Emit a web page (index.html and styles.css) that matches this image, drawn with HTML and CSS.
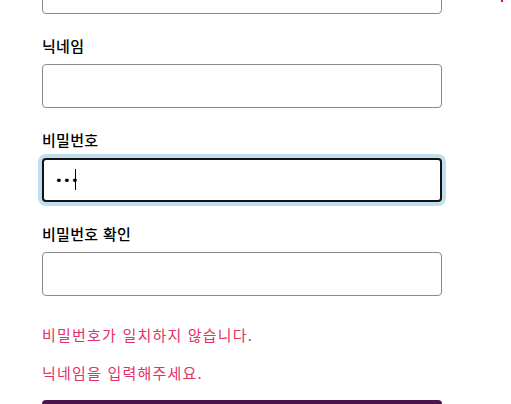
FILE: index.html
```html
<!DOCTYPE html>
<html lang="ko">
<head>
<meta charset="utf-8">
<link rel="stylesheet" href="styles.css">
</head>
<body>
<span class="dot"></span>
<form class="form">
  <input class="field-input" type="email" aria-label="이메일">
  <label class="field-label" for="nick">닉네임</label>
  <input class="field-input" id="nick" type="text">
  <label class="field-label" for="pw">비밀번호</label>
  <div class="input-wrap">
    <input class="field-input is-focused" id="pw" type="password" value="abc">
    <span class="caret"></span>
  </div>
  <label class="field-label" for="pw2">비밀번호 확인</label>
  <input class="field-input" id="pw2" type="password">
  <p class="error first">비밀번호가 일치하지 않습니다.</p>
  <p class="error">닉네임을 입력해주세요.</p>
  <button class="submit" type="submit">회원가입</button>
</form>
</body>
</html>
```
FILE: styles.css
```css
html, body {
  margin: 0;
  padding: 0;
  background: #fff;
}
body {
  font-family: "Noto Sans CJK KR", "Noto Sans", sans-serif;
  color: #000;
  position: relative;
}
.dot {
  position: absolute;
  left: 501px;
  top: 0;
  width: 2px;
  height: 2px;
  background: #f00;
}
.form {
  width: 400px;
  margin: -30px 0 0 42px;
  display: flex;
  flex-direction: column;
}
.field-label {
  font-size: 15px;
  line-height: 20px;
  margin: 22px 0 8px;
  font-weight: 500;
  letter-spacing: 0.3px;
}
.field-input {
  box-sizing: border-box;
  width: 400px;
  height: 44px;
  border: 1px solid #8a8a8a;
  border-radius: 4px;
  padding: 0 12px;
  font-size: 16px;
  font-family: inherit;
  background: #fff;
  outline: none;
  display: block;
}
.input-wrap {
  position: relative;
}
.field-input.is-focused {
  border: 2px solid #111;
  box-shadow: 0 0 0 4px #bee0ee;
  padding: 0 11px;
  font-family: "DejaVu Sans", sans-serif;
  font-size: 13px;
  letter-spacing: 0.3px;
}
.caret {
  position: absolute;
  left: 33px;
  top: 11px;
  width: 1px;
  height: 21px;
  background: #000;
}
.error {
  margin: 0;
  font-size: 15px;
  line-height: 22px;
  color: #e3306a;
  margin-top: 16px;
  letter-spacing: 1.2px;
}
.error.first {
  margin-top: 28px;
}
.submit {
  margin-top: 16px;
  height: 44px;
  width: 400px;
  border: none;
  border-radius: 4px;
  background: #4a154b;
  color: #fff;
  font-family: inherit;
  font-size: 16px;
}
```
